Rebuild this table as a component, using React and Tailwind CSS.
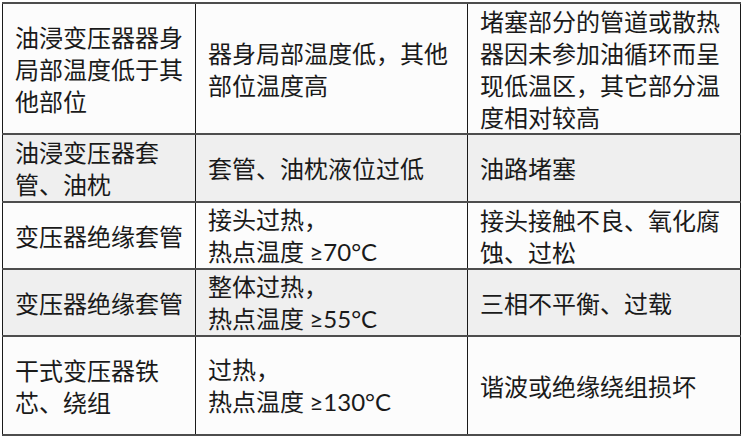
import React from 'react';

const rows = [
  {
    h: 'h-[131px]',
    bg: 'bg-[#fcfcfc]',
    cells: [
      '油浸变压器器身局部温度低于其他部位',
      '器身局部温度低，其他部位温度高',
      '堵塞部分的管道或散热器因未参加油循环而呈现低温区，其它部分温度相对较高',
    ],
  },
  {
    h: 'h-[68px]',
    bg: 'bg-[#efefef]',
    cells: ['油浸变压器套管、油枕', '套管、油枕液位过低', '油路堵塞'],
  },
  {
    h: 'h-[67px]',
    bg: 'bg-[#fcfcfc]',
    cells: ['变压器绝缘套管', { lead: '接头过热，', temp: '≥70°C' }, '接头接触不良、氧化腐蚀、过松'],
  },
  {
    h: 'h-[67px]',
    bg: 'bg-[#efefef]',
    cells: ['变压器绝缘套管', { lead: '整体过热，', temp: '≥55°C' }, '三相不平衡、过载'],
  },
  {
    h: 'h-[99px]',
    bg: 'bg-[#fcfcfc]',
    cells: ['干式变压器铁芯、绕组', { lead: '过热，', temp: '≥130°C' }, '谐波或绝缘绕组损坏'],
  },
];

const Cell = ({ value }) => (
  <td className="border-x-[1.5px] border-y-2 border-x-[#1a1a1a] border-y-[#4d4d4d] pl-3 pr-2 align-middle">
    {typeof value === 'object' ? (
      <>
        <div>{value.lead}</div>
        <div>
          热点温度{' '}
          <span style={{ fontFamily: '"Lato", "DejaVu Sans", sans-serif' }}>{value.temp}</span>
        </div>
      </>
    ) : (
      value
    )}
  </td>
);

export default function App() {
  return (
    <div
      className="w-[744px] h-[440px] bg-white pl-[2px] pt-[2px] text-[24px] leading-[32px] text-[#1a1a1a]"
      style={{ fontFamily: '"Noto Sans CJK SC", sans-serif' }}
    >
      <table className="w-[738px] table-fixed border-collapse">
        <colgroup>
          <col className="w-[193px]" />
          <col className="w-[272px]" />
          <col className="w-[273px]" />
        </colgroup>
        <tbody>
          {rows.map((row, i) => (
            <tr key={i} className={`${row.h} ${row.bg}`}>
              {row.cells.map((c, j) => (
                <Cell key={j} value={c} />
              ))}
            </tr>
          ))}
        </tbody>
      </table>
    </div>
  );
}
